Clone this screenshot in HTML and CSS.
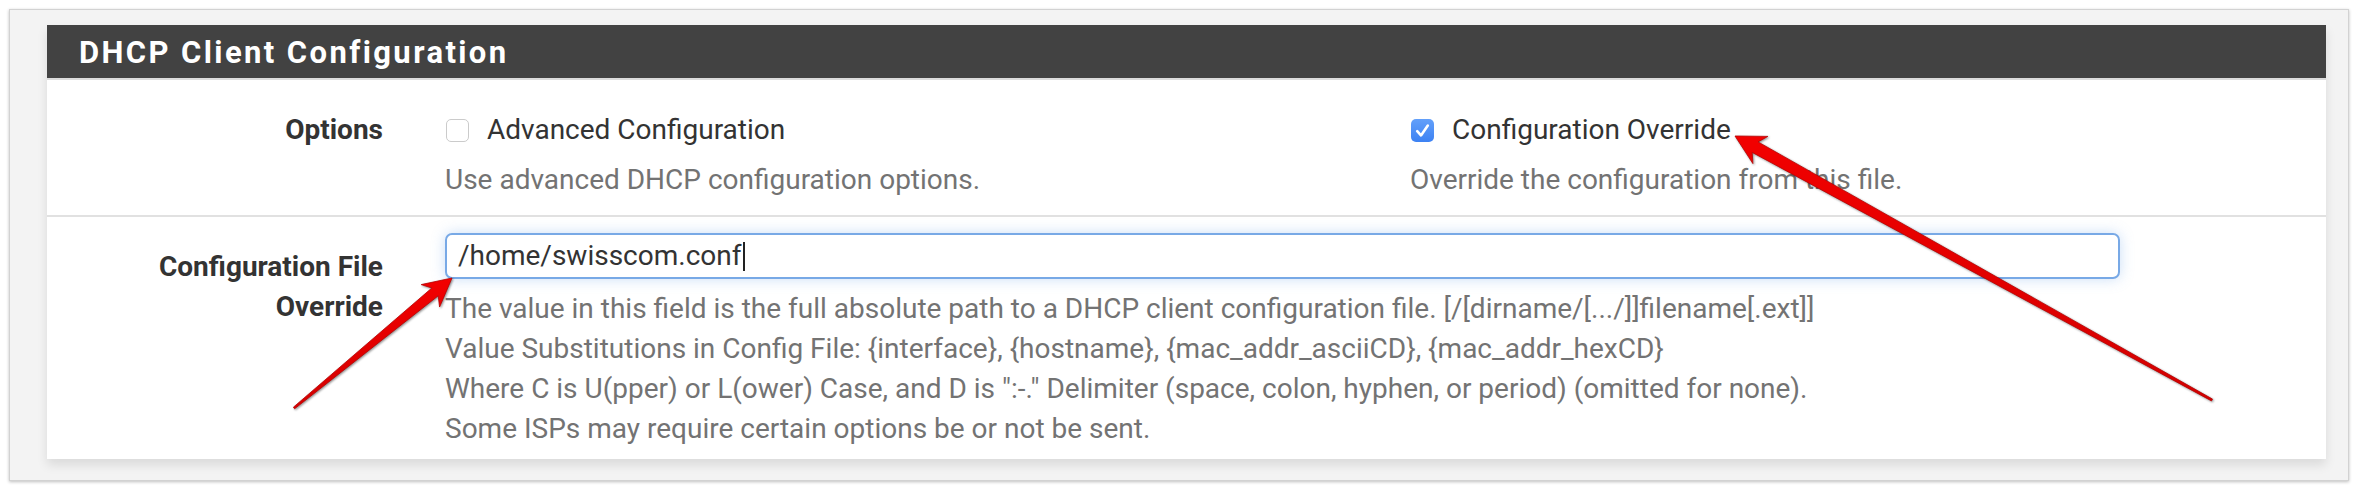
FILE: index.html
```html
<!DOCTYPE html>
<html lang="en">
<head>
<meta charset="utf-8">
<title>DHCP Client Configuration</title>
<link rel="stylesheet" href="styles.css">
</head>
<body>
<div class="frame">
  <div class="panel">
    <div class="panel-heading"><h2 class="panel-title">DHCP Client Configuration</h2></div>
    <div class="panel-body">
      <div class="form-row row-options">
        <div class="field-label">Options</div>
        <div class="field-content two-col">
          <div class="opt opt-first">
            <label class="check"><span class="box"></span>Advanced Configuration</label>
            <div class="help">Use advanced DHCP configuration options.</div>
          </div>
          <div class="opt">
            <label class="check"><span class="box checked"><svg viewBox="0 0 23 23" width="23" height="23"><path d="M6.2 12.2 L10 16.4 L16.8 6.6" fill="none" stroke="#fff" stroke-width="2.6" stroke-linecap="round" stroke-linejoin="round"/></svg></span>Configuration Override</label>
            <div class="help">Override the configuration from this file.</div>
          </div>
        </div>
      </div>
      <div class="form-row row-file">
        <div class="field-label">Configuration File Override</div>
        <div class="field-content">
          <div class="input">/home/swisscom.conf<span class="caret"></span></div>
          <div class="help">
            <div>The value in this field is the full absolute path to a DHCP client configuration file. [/[dirname/[.../]]filename[.ext]]</div>
            <div>Value Substitutions in Config File: {interface}, {hostname}, {mac_addr_asciiCD}, {mac_addr_hexCD}</div>
            <div>Where C is U(pper) or L(ower) Case, and D is ":-." Delimiter (space, colon, hyphen, or period) (omitted for none).</div>
            <div>Some ISPs may require certain options be or not be sent.</div>
          </div>
        </div>
      </div>
    </div>
  </div>
</div>
<svg class="arrows" width="2358" height="490" viewBox="0 0 2358 490">
  <defs>
    <linearGradient id="red" x1="0" y1="0" x2="0" y2="1">
      <stop offset="0" stop-color="#f20000"/>
      <stop offset="1" stop-color="#d40000"/>
    </linearGradient>
  </defs>
  <polygon class="arrow" points="452,278 439.6,307 438.2,295.8 294.6,408.8 293.4,407.2 431.8,288 421.2,284.6"/>
  <polygon class="arrow" points="1735,136 1767.9,136.4 1758,141.9 2212.5,399.1 2211.5,400.9 1752.2,152.4 1752.9,163.6"/>
</svg>
</body>
</html>
```
FILE: styles.css
```css
* { box-sizing: border-box; }
html, body { margin: 0; padding: 0; background: #ffffff; }
body {
  width: 2358px;
  height: 490px;
  position: relative;
  font-family: Roboto, "Liberation Sans", Arial, sans-serif;
  font-size: 28px;
  line-height: 40px;
  color: #333333;
  overflow: hidden;
}
.frame {
  margin: 9px 0 0 9px;
  width: 2340px;
  height: 472px;
  background: #f3f3f3;
  border: 1px solid #d2d2d2;
  box-shadow: 0 1px 3px rgba(0,0,0,0.25);
  padding: 15px 22px 0 37px;
}
.panel {
  background: #ffffff;
  height: 434px;
  box-shadow: 0 6px 10px rgba(0,0,0,0.10);
}
.panel-heading {
  height: 55px;
  background: #424242;
  border-bottom: 2px solid #dcdcdc;
  display: flex;
  align-items: center;
  padding: 3px 0 0 32px;
}
.panel-title {
  margin: 0;
  color: #ffffff;
  font-size: 31px;
  font-weight: 700;
  letter-spacing: 2.4px;
  line-height: 40px;
}
.form-row {
  display: flex;
  align-items: flex-start;
}
.row-options {
  height: 137px;
  border-bottom: 2px solid #e1e1e1;
}
.row-file {
  height: 242px;
}
.field-label {
  width: 290px;
  margin-left: 46px;
  padding-top: 30px;
  text-align: right;
  font-weight: 700;
  color: #333333;
}
.field-content {
  margin-left: 62px;
}
.row-options .field-content { padding-top: 30px; }
.row-file .field-content { padding-top: 16px; width: 1675px; }
.two-col { display: flex; }
.opt-first { width: 965px; }
.check {
  display: flex;
  align-items: center;
  height: 40px;
  color: #333333;
}
.box {
  width: 23px;
  height: 23px;
  border-radius: 5px;
  border: 1.5px solid #cbcbcb;
  background: #ffffff;
  margin-right: 18px;
  margin-left: 1px;
  flex: none;
  display: block;
}
.box.checked {
  border: none;
  background: linear-gradient(#63a0fa, #3d82f3);
}
.box svg { display: block; }
.help {
  color: #737373;
  margin-top: 10px;
}
.input {
  height: 46px;
  border: 2px solid #78a9e6;
  border-radius: 7px;
  box-shadow: 0 0 14px rgba(102,160,233,0.35);
  padding: 0 11px;
  display: flex;
  align-items: center;
  color: #333333;
  background: #ffffff;
}
.caret {
  display: inline-block;
  width: 2px;
  height: 29px;
  background: #222222;
  margin-left: 1px;
}
.arrows {
  position: absolute;
  top: 0;
  left: 0;
  pointer-events: none;
}
.arrow {
  fill: url(#red);
  stroke: #b80000;
  stroke-width: 0.8;
  stroke-linejoin: round;
  filter: drop-shadow(1px 1px 1px rgba(0,0,0,0.45));
}
```
